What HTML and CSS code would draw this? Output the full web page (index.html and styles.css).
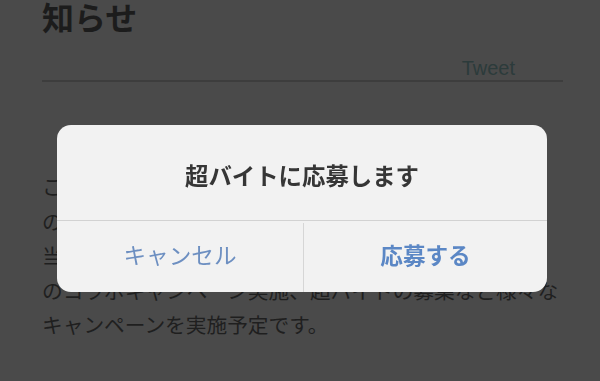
FILE: index.html
```html
<!DOCTYPE html>
<html lang="ja">
<head>
<meta charset="utf-8">
<title>お知らせ</title>
<link rel="stylesheet" href="styles.css">
</head>
<body>
<main class="page">
  <h1 class="page-title">知らせ</h1>
  <div class="share-row"><a class="tweet">Tweet</a></div>
  <p class="notice">こちらでは超バイトに関する最新情報やキャンペーン<br>の詳細をお知らせしていきます。<br>当サイトでは今後、人気ゲームや人気アニメなどと<br>のコラボキャンペーン実施、超バイトの募集など様々な<br>キャンペーンを実施予定です。</p>
</main>
<div class="backdrop">
  <div class="alert" role="dialog">
    <div class="alert-title">超バイトに応募します</div>
    <div class="alert-actions">
      <button class="alert-btn cancel">キャンセル</button>
      <button class="alert-btn primary">応募する</button>
    </div>
  </div>
</div>
</body>
</html>
```
FILE: styles.css
```css
html, body {
  margin: 0;
  padding: 0;
  background: #4a4a4a;
  width: 600px;
  height: 381px;
  overflow: hidden;
}

body {
  font-family: "Noto Sans CJK JP", "Noto Sans", sans-serif;
}

.page {
  padding: 0 37px 0 42px;
}

.page-title {
  margin: 0;
  font-size: 32px;
  line-height: 32px;
  padding-bottom: 2px;
  font-weight: 700;
  color: #1c1c1c;
}

.share-row {
  display: flex;
  justify-content: flex-end;
  padding: 23px 48px 1px 0;
  border-bottom: 2px solid #3d3d3d;
}

.tweet {
  font-family: "Liberation Sans", Arial, sans-serif;
  font-size: 20px;
  line-height: 22px;
  color: #2c3b3b;
}

.notice {
  margin: 87px 0 0;
  font-size: 20.7px;
  line-height: 34.6px;
  color: #1f1f1f;
  white-space: nowrap;
}

.backdrop {
  position: fixed;
  inset: 0;
}

.alert {
  position: absolute;
  left: 57px;
  top: 125px;
  width: 490px;
  height: 167px;
  background: #f2f2f2;
  border-radius: 14px;
  display: flex;
  flex-direction: column;
  overflow: hidden;
}

.alert-title {
  height: 90px;
  padding-top: 5px;
  display: flex;
  align-items: center;
  justify-content: center;
  font-size: 23.4px;
  font-weight: 700;
  color: #363636;
  border-bottom: 1px solid #d2d2d2;
}

.alert-actions {
  flex: 1;
  display: grid;
  grid-template-columns: 246px 1fr;
}

.alert-btn {
  border: 0;
  margin: 0;
  padding: 0 0 4px;
  background: transparent;
  font-family: "Noto Sans CJK JP", "Noto Sans", sans-serif;
  font-size: 22.6px;
  display: flex;
  align-items: center;
  justify-content: center;
}

.cancel {
  color: #6d8fc1;
  font-weight: 400;
}

.primary {
  color: #5b87c5;
  font-weight: 700;
  border-left: 1px solid #d6d6d6;
  margin-top: 2px;
  padding-bottom: 6px;
}
```
